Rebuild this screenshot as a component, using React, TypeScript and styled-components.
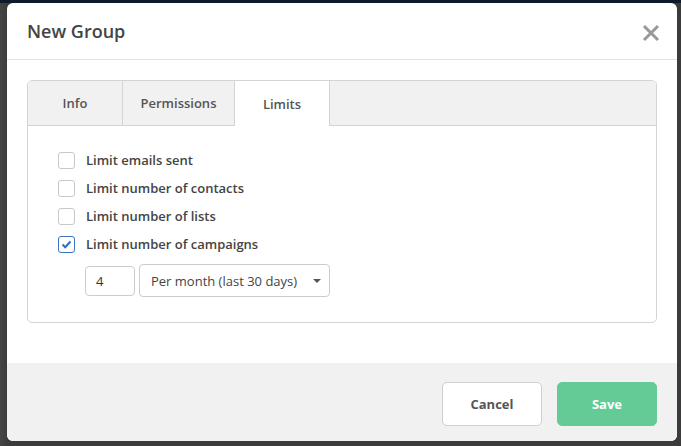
import styled, { createGlobalStyle } from "styled-components";

const GlobalStyle = createGlobalStyle`
  html, body {
    margin: 0;
    padding: 0;
    background: #3d3d3d;
    font-family: "Open Sans", "Liberation Sans", sans-serif;
  }
  * {
    box-sizing: border-box;
  }
`;

const Backdrop = styled.div`
  width: 681px;
  height: 446px;
  overflow: hidden;
  border-top: 3px solid #0d1a2b;
  background: linear-gradient(to right, #454545 0px, #3b3b3b 8px, #3b3b3b 100%);
  padding: 0 4px 0 7px;
`;

const Modal = styled.div`
  width: 670px;
  height: 438px;
  background: #fff;
  border-radius: 6px;
  overflow: hidden;
  display: flex;
  flex-direction: column;
`;

const Header = styled.div`
  height: 57px;
  flex: none;
  display: flex;
  align-items: center;
  justify-content: space-between;
  padding: 0 14px 0 20px;
  border-bottom: 1px solid #e2e2e2;
`;

const Title = styled.h4`
  margin: 0;
  font-size: 18px;
  font-weight: 600;
  color: #444;
`;

const CloseButton = styled.button`
  border: 0;
  background: none;
  padding: 0;
  width: 24px;
  height: 24px;
  display: flex;
  align-items: center;
  justify-content: center;
  cursor: pointer;
  margin-top: 3px;
`;

const Body = styled.div`
  flex: 1;
  padding: 20px 20px 40px;
`;

const TabBox = styled.div`
  border: 1px solid #d4d4d4;
  border-radius: 5px;
  overflow: hidden;
`;

const TabBar = styled.div`
  display: flex;
  height: 45px;
  background: #f1f1f1;
  border-bottom: 1px solid #d4d4d4;
`;

const Tab = styled.div<{ $active?: boolean; $width: number }>`
  width: ${(p) => p.$width}px;
  display: flex;
  align-items: center;
  justify-content: center;
  font-size: 13px;
  font-weight: 600;
  color: #555;
  border-right: 1px solid #d4d4d4;
  background: ${(p) => (p.$active ? "#fff" : "#f1f1f1")};
  margin-bottom: ${(p) => (p.$active ? "-1px" : "0")};
`;

const TabPane = styled.div`
  padding: 20px 30px 25px;
  display: flex;
  flex-direction: column;
`;

const CheckRow = styled.label`
  display: flex;
  align-items: center;
  gap: 11px;
  height: 28px;
  font-size: 13px;
  font-weight: 600;
  color: #444;
`;

const Box = styled.span<{ $checked?: boolean }>`
  width: 17px;
  height: 17px;
  border: 1px solid ${(p) => (p.$checked ? "#3b73c0" : "#c8c8c8")};
  border-radius: 3px;
  background: #fff;
  display: flex;
  align-items: center;
  justify-content: center;
`;

const LimitRow = styled.div`
  display: flex;
  align-items: center;
  gap: 4px;
  margin: 6px 0 0 27px;
`;

const NumberInput = styled.div`
  width: 50px;
  height: 30px;
  border: 1px solid #ccc;
  border-radius: 4px;
  font-size: 13px;
  color: #333;
  display: flex;
  align-items: center;
  padding-left: 10px;
`;

const Select = styled.div`
  width: 191px;
  height: 33px;
  border: 1px solid #ccc;
  border-radius: 4px;
  font-size: 13px;
  color: #444;
  display: flex;
  align-items: center;
  justify-content: space-between;
  padding: 0 8px 0 11px;
`;

const Caret = styled.span`
  width: 0;
  height: 0;
  border-left: 4px solid transparent;
  border-right: 4px solid transparent;
  border-top: 4px solid #555;
`;

const Footer = styled.div`
  height: 80px;
  flex: none;
  background: #f1f1f1;
  display: flex;
  justify-content: flex-end;
  align-items: flex-start;
  gap: 15px;
  padding: 19px 20px 0;
`;

const Button = styled.button<{ $primary?: boolean }>`
  width: 100px;
  height: 44px;
  border-radius: 5px;
  font-family: inherit;
  font-size: 13px;
  font-weight: 700;
  border: 1px solid ${(p) => (p.$primary ? "#64cb96" : "#cfcfcf")};
  background: ${(p) => (p.$primary ? "#64cb96" : "#fff")};
  color: ${(p) => (p.$primary ? "#fff" : "#555")};
`;

const limits = [
  { label: "Limit emails sent", checked: false },
  { label: "Limit number of contacts", checked: false },
  { label: "Limit number of lists", checked: false },
  { label: "Limit number of campaigns", checked: true },
];

export default function App() {
  return (
    <>
      <GlobalStyle />
      <Backdrop>
        <Modal>
          <Header>
            <Title>New Group</Title>
            <CloseButton aria-label="Close">
              <svg width="18" height="18" viewBox="0 0 18 18">
                <path d="M2 2 L16 16 M16 2 L2 16" stroke="#999" strokeWidth="3" />
              </svg>
            </CloseButton>
          </Header>
          <Body>
            <TabBox>
              <TabBar>
                <Tab $width={95}>Info</Tab>
                <Tab $width={112}>Permissions</Tab>
                <Tab $width={95} $active>
                  Limits
                </Tab>
              </TabBar>
              <TabPane>
                {limits.map((l) => (
                  <CheckRow key={l.label}>
                    <Box $checked={l.checked}>
                      {l.checked && (
                        <svg width="11" height="9" viewBox="0 0 11 9">
                          <path
                            d="M1.5 4.5 L4.2 7.2 L9.5 1.5"
                            stroke="#2f6dc4"
                            strokeWidth="2"
                            fill="none"
                          />
                        </svg>
                      )}
                    </Box>
                    {l.label}
                  </CheckRow>
                ))}
                <LimitRow>
                  <NumberInput>4</NumberInput>
                  <Select>
                    Per month (last 30 days)
                    <Caret />
                  </Select>
                </LimitRow>
              </TabPane>
            </TabBox>
          </Body>
          <Footer>
            <Button>Cancel</Button>
            <Button $primary>Save</Button>
          </Footer>
        </Modal>
      </Backdrop>
    </>
  );
}
